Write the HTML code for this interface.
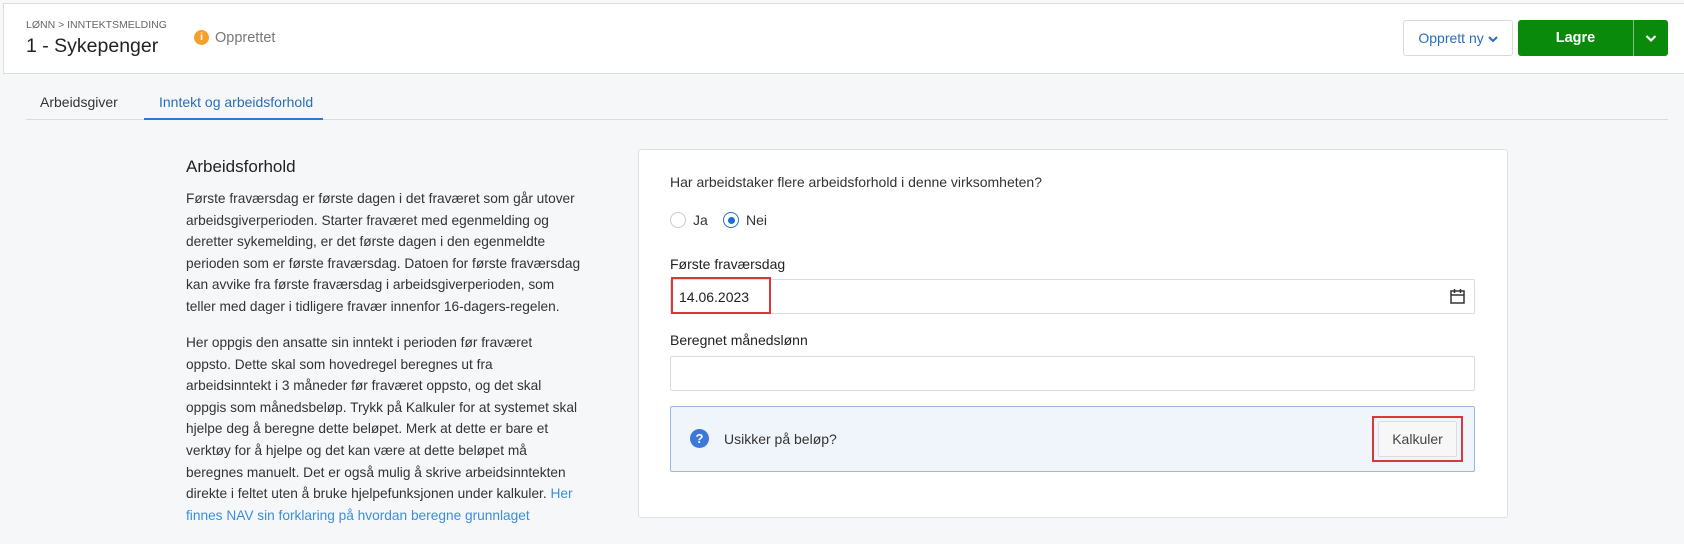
<!DOCTYPE html>
<html><head><meta charset="utf-8"><style>
*{box-sizing:border-box;margin:0;padding:0}
body{width:1684px;height:544px;overflow:hidden;background:#f6f7f9;font-family:"Liberation Sans",sans-serif;color:#222;position:relative}
.abs{position:absolute}
.hdr{left:3px;top:3px;width:1681px;height:71px;background:#fff;border-top:1px solid #ddd;border-left:1px solid #ddd;border-bottom:1px solid #ddd}
.p{font-size:13.7px;line-height:21.6px;color:#333}
.lbl{font-size:14px;color:#222}
.inp{background:#fff;border:1px solid #d8dbe0;border-radius:2px}
</style></head><body>
<div class="abs hdr"></div>
<div class="abs" style="left:26px;top:19px;font-size:10.5px;color:#666">LØNN &gt; INNTEKTSMELDING</div>
<div class="abs" style="left:26px;top:35px;font-size:19.5px;color:#222">1 - Sykepenger</div>
<div class="abs" style="left:194px;top:30px;width:15px;height:15px;border-radius:50%;background:#f5a02a;color:#fff;font-size:10px;font-weight:bold;text-align:center;line-height:15px">i</div>
<div class="abs" style="left:215px;top:30px;font-size:14.5px;color:#777">Opprettet</div>
<div class="abs" style="left:1403px;top:20px;width:110px;height:36px;border:1px solid #d6d9de;border-radius:3px;background:#fff;color:#2a6ebb;font-size:14px;line-height:34px;text-align:center">Opprett ny <svg width="10" height="8" viewBox="0 0 10 8"><path d="M1 2l4 4 4-4" stroke="#2a6ebb" stroke-width="2" fill="none"/></svg></div>
<div class="abs" style="left:1518px;top:20px;width:150px;height:36px;border-radius:3px;background:#0a8a0a"></div>
<div class="abs" style="left:1518px;top:20px;width:115px;height:36px;color:#fff;font-size:14.5px;font-weight:bold;line-height:36px;text-align:center">Lagre</div>
<div class="abs" style="left:1633px;top:20px;width:1px;height:36px;background:#7fc27f"></div>
<svg class="abs" style="left:1645px;top:34px" width="12" height="9" viewBox="0 0 12 9"><path d="M1.5 2l4.5 4.5 4.5-4.5" stroke="#fff" stroke-width="2.2" fill="none"/></svg>
<div class="abs" style="left:40px;top:94px;font-size:14px;color:#333">Arbeidsgiver</div>
<div class="abs" style="left:159px;top:94px;font-size:14px;color:#2a6ebb">Inntekt og arbeidsforhold</div>
<div class="abs" style="left:26px;top:119px;width:1642px;height:1px;background:#d8dbe0"></div>
<div class="abs" style="left:144px;top:118px;width:179px;height:2px;background:#2a7bc8"></div>
<div class="abs" style="left:186px;top:157px;font-size:17px;color:#222">Arbeidsforhold</div>
<div class="abs p" style="left:186px;top:188px;white-space:nowrap">Første fraværsdag er første dagen i det fraværet som går utover<br>arbeidsgiverperioden. Starter fraværet med egenmelding og<br>deretter sykemelding, er det første dagen i den egenmeldte<br>perioden som er første fraværsdag. Datoen for første fraværsdag<br>kan avvike fra første fraværsdag i arbeidsgiverperioden, som<br>teller med dager i tidligere fravær innenfor 16-dagers-regelen.</div>
<div class="abs p" style="left:186px;top:332px;white-space:nowrap">Her oppgis den ansatte sin inntekt i perioden før fraværet<br>oppsto. Dette skal som hovedregel beregnes ut fra<br>arbeidsinntekt i 3 måneder før fraværet oppsto, og det skal<br>oppgis som månedsbeløp. Trykk på Kalkuler for at systemet skal<br>hjelpe deg å beregne dette beløpet. Merk at dette er bare et<br>verktøy for å hjelpe og det kan være at dette beløpet må<br>beregnes manuelt. Det er også mulig å skrive arbeidsinntekten<br>direkte i feltet uten å bruke hjelpefunksjonen under kalkuler. <span style="color:#3a8ee0">Her<br>finnes NAV sin forklaring på hvordan beregne grunnlaget</span></div>
<div class="abs" style="left:638px;top:149px;width:870px;height:369px;background:#fff;border:1px solid #dde0e4;border-radius:3px"></div>
<div class="abs lbl" style="left:670px;top:174px;color:#333">Har arbeidstaker flere arbeidsforhold i denne virksomheten?</div>
<div class="abs" style="left:670px;top:212px;width:16px;height:16px;border:1px solid #ccc;border-radius:50%;background:#fff"></div>
<div class="abs lbl" style="left:693px;top:212px;color:#333">Ja</div>
<div class="abs" style="left:723px;top:212px;width:16px;height:16px;border:1.5px solid #1f6fd0;border-radius:50%;background:#fff"></div>
<div class="abs" style="left:727.5px;top:216.5px;width:7px;height:7px;border-radius:50%;background:#1f6fd0"></div>
<div class="abs lbl" style="left:746px;top:212px;color:#333">Nei</div>
<div class="abs lbl" style="left:670px;top:256px">Første fraværsdag</div>
<div class="abs inp" style="left:670px;top:279px;width:805px;height:35px"></div>
<div class="abs" style="left:671px;top:277px;width:100px;height:37px;border:2px solid #d9373b"></div>
<div class="abs lbl" style="left:679px;top:289px">14.06.2023</div>
<svg class="abs" style="left:1450px;top:288px" width="15" height="16" viewBox="0 0 15 16"><rect x="1" y="3" width="13" height="12" fill="none" stroke="#333" stroke-width="1.5"/><path d="M1 7h13M4.5 1v4M10.5 1v4" stroke="#333" stroke-width="1.5"/></svg>
<div class="abs lbl" style="left:670px;top:332px">Beregnet månedslønn</div>
<div class="abs inp" style="left:670px;top:356px;width:805px;height:35px"></div>
<div class="abs" style="left:670px;top:406px;width:805px;height:66px;background:#f0f5fc;border:1px solid #9ab8dc;border-radius:2px"></div>
<div class="abs" style="left:690px;top:429px;width:19px;height:19px;border-radius:50%;background:#3b78d8;color:#fff;font-size:13px;font-weight:bold;text-align:center;line-height:19px">?</div>
<div class="abs lbl" style="left:724px;top:431px;color:#333">Usikker på beløp?</div>
<div class="abs" style="left:1372px;top:416px;width:91px;height:46px;border:2px solid #d9373b"></div>
<div class="abs" style="left:1378px;top:421px;width:79px;height:36px;background:#f7f7f7;border:1px solid #ddd;border-radius:2px;font-size:14px;color:#444;text-align:center;line-height:34px">Kalkuler</div>
</body></html>
